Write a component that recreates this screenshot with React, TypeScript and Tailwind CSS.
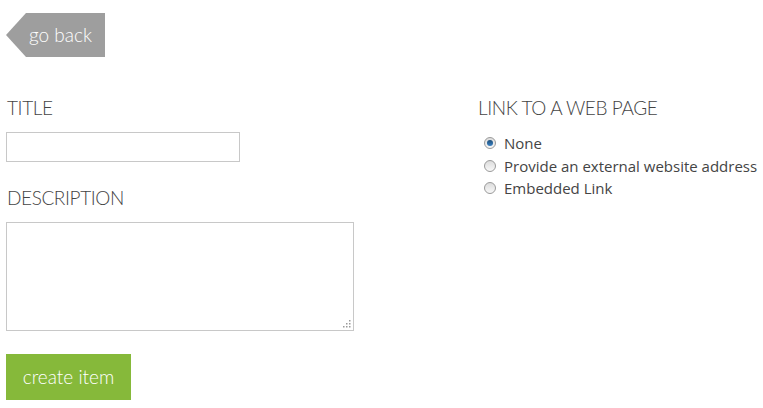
import { useState } from 'react';

const options = ['None', 'Provide an external website address', 'Embedded Link'];

function Radio({ checked }: { checked: boolean }) {
  return (
    <span className="relative flex h-[12px] w-[12px] shrink-0 items-center justify-center rounded-full border border-[#9a9a9a] bg-gradient-to-b from-[#dcdcdc] to-[#f8f8f8]">
      {checked && <span className="h-[6px] w-[6px] rounded-full bg-gradient-to-b from-[#1d4f7a] to-[#3b82c4]" />}
    </span>
  );
}

function Grip() {
  // dotted resize corner
  const dots = [
    [6, 0],
    [3, 3], [6, 3],
    [0, 6], [3, 6], [6, 6],
  ];
  return (
    <svg className="pointer-events-none absolute bottom-[3px] right-[3px]" width="8" height="8">
      {dots.map(([x, y], i) => (
        <rect key={i} x={x} y={y} width="1.5" height="1.5" fill="#9a9a9a" />
      ))}
    </svg>
  );
}

export default function App() {
  const [link, setLink] = useState(0);

  return (
    <div className="h-[408px] w-[763px] bg-white font-['Lato',sans-serif] text-[#444]">
      <div className="px-[6px] pt-[13px]">
        <button className="flex h-[44px] items-stretch text-white">
          <span className="h-0 w-0 self-center border-y-[22px] border-r-[20px] border-y-transparent border-r-[#9e9e9e]" />
          <span className="flex items-center bg-[#9e9e9e] pl-[3px] pr-[13px] text-[19px] font-light">go back</span>
        </button>
      </div>

      <div className="mt-[39px] flex px-[6px]">
        <div className="w-[472px] shrink-0">
          <label className="block pl-[1px] text-[19px] font-light leading-[24px] tracking-[-0.4px]">TITLE</label>
          <input className="mt-[12px] block h-[30px] w-[234px] border border-[#c8c8c8] bg-white px-1 outline-none" />

          <label className="mt-[24px] block pl-[1px] text-[19px] font-light leading-[24px] tracking-[-0.4px]">DESCRIPTION</label>
          <div className="relative mt-[12px] h-[109px] w-[348px]">
            <textarea className="block h-full w-full resize-none border border-[#c8c8c8] bg-white outline-none" />
            <Grip />
          </div>

          <button className="mt-[23px] h-[46px] w-[125px] bg-[#86b93a] text-[19px] font-light text-white">create item</button>
        </div>

        <div className="flex-1 whitespace-nowrap">
          <div className="text-[19px] font-light leading-[24px] tracking-[-0.4px]">LINK TO A WEB PAGE</div>
          <div className="mt-[14px] flex flex-col gap-[4px] pl-[6px] font-['Open_Sans',sans-serif] text-[15px] text-[#444]">
            {options.map((o, i) => (
              <label key={o} className="flex h-[18.5px] cursor-pointer items-center gap-[8px]" onClick={() => setLink(i)}>
                <Radio checked={link === i} />
                <span>{o}</span>
              </label>
            ))}
          </div>
        </div>
      </div>
    </div>
  );
}
